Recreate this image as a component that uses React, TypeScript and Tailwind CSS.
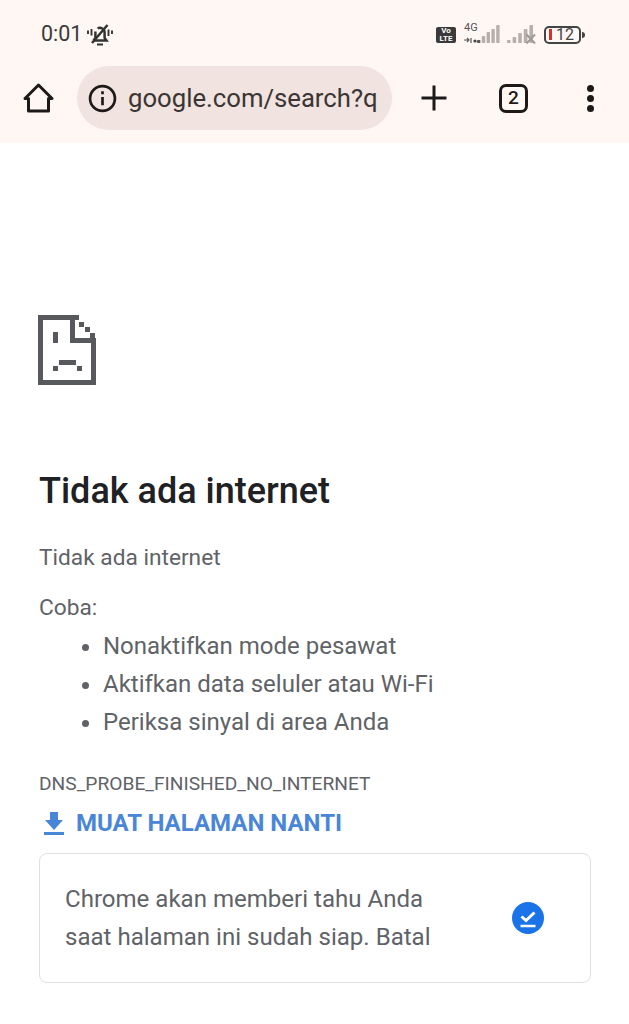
function MuteBell() {
  return (
    <svg width="26" height="22" viewBox="0 0 26 22" fill="none" stroke="#333" strokeWidth="2.5">
      <path d="M6.500 16.500h13l-1.900-2.600V8.500a4.800 4.800 0 0 0-7-4.200M8.400 7.500v6.400l-1.900 2.600" />
      <path d="M10 20.500h6" strokeWidth="2" />
      <path d="M5 19 20.500 1" />
      <path d="M4.500 5v6.500M1 6.500v3.500M21.500 5.500v6.500M25 6.500v3.500" strokeWidth="1.900" />
    </svg>
  );
}

function SignalBars() {
  return (
    <svg width="37" height="19" viewBox="0 0 37 19">
      <path d="M1 15h4M4 13l2 2-2 2M8 13v5" stroke="#555" strokeWidth="1.200" fill="none" />
      <circle cx="12" cy="16" r="1.600" fill="#444" />
      {[3, 7, 11, 14, 18].map((h, i) => (
        <rect key={i} x={14 + i * 4.8} y={18 - h} width="3.400" height={h} rx="0.800" fill={i === 0 ? "#555" : "#b5b0ae"} />
      ))}
    </svg>
  );
}

function NoSignalBars() {
  return (
    <svg width="29" height="19" viewBox="0 0 29 19">
      {[3, 6, 10, 14, 18].map((h, i) => (
        <rect key={i} x={i * 5.6} y={18 - h} width="3.600" height={h} rx="0.800" fill="#b5b0ae" />
      ))}
      <path d="M19.500 9.500l8.500 9M28 9.500l-8.500 9" stroke="#9e9a98" strokeWidth="2" />
    </svg>
  );
}

function SadTab() {
  return (
    <svg width="58" height="70" viewBox="0 0 58 70" fill="#58595c" shapeRendering="crispEdges" className="-ml-[1px]">
      <path d="M0 0h41v5H5v60h48V23h5v47H0z" />
      <path d="M32 5h5v18h21v5H32z" />
      <rect x="41" y="7" width="5" height="5" />
      <rect x="47" y="12" width="5" height="5" />
      <rect x="52" y="18" width="5" height="5" />
      <rect x="15" y="17" width="5" height="11" />
      <rect x="21" y="45" width="17" height="5" />
      <rect x="15" y="51" width="5" height="5" />
      <rect x="39" y="51" width="5" height="5" />
    </svg>
  );
}

export default function App() {
  return (
    <div className="h-[1024px] w-[629px] overflow-hidden bg-white font-['Roboto',sans-serif]">
      <header className="h-[143px] bg-[#fff7f4]">
        <div className="flex h-[66px] items-center justify-between pl-[41px] pr-[44px] pt-[3px]">
          <div className="flex items-center gap-[5px] text-[21.500px] text-[#3c3a39]">
            <span>0:01</span>
            <MuteBell />
          </div>
          <div className="flex items-center">
            <span className="mr-[7px] flex h-[16px] w-[20px] flex-col items-center justify-center rounded-[2px] bg-[#3a3a3a] text-[8px] font-bold leading-[8px] text-white">
              <span>Vo</span>
              <span>LTE</span>
            </span>
            <div className="relative mr-[7px]">
              <span className="absolute -top-[3px] left-[1px] text-[11px] leading-none text-[#555]">4G</span>
              <SignalBars />
            </div>
            <div className="mr-[8px]">
              <NoSignalBars />
            </div>
            <div className="flex h-[18px] w-[37px] items-center rounded-[5px] border-2 border-[#444] pl-[3px]">
              <span className="h-[11px] w-[3px] bg-[#d32f2f]" />
              <span className="ml-[4px] text-[16px] leading-none text-[#444]">12</span>
            </div>
            <span className="ml-[1px] h-[6px] w-[3px] rounded-r-sm bg-[#444]" />
          </div>
        </div>
        <div className="flex h-[64px] items-center pl-[23px]">
          <svg width="31" height="30" viewBox="0 0 31 30" fill="none" stroke="#1c1918" strokeWidth="3" strokeLinejoin="round">
            <path d="M2 15.500 15.500 2 29 15.500h-3.500V28H5.500V15.500z" />
          </svg>
          <div className="ml-[23px] flex h-[64px] w-[315px] shrink-0 items-center overflow-hidden rounded-[32px] bg-[#f0e3e0] pl-[11px]">
            <svg width="29" height="29" viewBox="0 0 28 28" fill="none" stroke="#1c1918" strokeWidth="2.600" className="shrink-0">
              <circle cx="14" cy="14" r="12" />
              <path d="M14 12.500v8" />
              <path d="M14 7v3" />
            </svg>
            <span className="ml-[11px] whitespace-nowrap pt-[1px] text-[25.700px] text-[#3b3533]">google.com/search?q</span>
          </div>
          <svg width="28" height="28" viewBox="0 0 28 28" stroke="#1c1918" strokeWidth="3" className="ml-[28px] shrink-0">
            <path d="M14 1.500v25M1.500 14h25" />
          </svg>
          <div className="ml-[51px] flex h-[29px] w-[29px] shrink-0 items-center justify-center rounded-[7px] border-[3px] border-[#1c1918] text-[19px] font-medium text-[#1c1918]">
            2
          </div>
          <div className="ml-[59px] flex shrink-0 flex-col gap-[3px]">
            <span className="h-[7px] w-[7px] rounded-full bg-[#1c1918]" />
            <span className="h-[7px] w-[7px] rounded-full bg-[#1c1918]" />
            <span className="h-[7px] w-[7px] rounded-full bg-[#1c1918]" />
          </div>
        </div>
      </header>

      <main className="px-[39px] pt-[172px]">
        <SadTab />
        <h1 className="mt-[84px] text-[36px] font-medium leading-[44px] text-[#202124]">Tidak ada internet</h1>
        <p className="mt-[29px] text-[22.700px] leading-[32px] text-[#5f6368]">Tidak ada internet</p>
        <p className="mt-[18px] text-[22.700px] leading-[32px] text-[#5f6368]">Coba:</p>
        <ul className="ml-[64px] mt-[3px] list-disc text-[24px] leading-[38px] text-[#5f6368]">
          <li>Nonaktifkan mode pesawat</li>
          <li>Aktifkan data seluler atau Wi-Fi</li>
          <li>Periksa sinyal di area Anda</li>
        </ul>
        <p className="mt-[31px] text-[19.200px] leading-[24px] text-[#5f6368]">DNS_PROBE_FINISHED_NO_INTERNET</p>
        <div className="mt-[11px] flex h-[32px] items-center text-[#4a86d8]">
          <svg width="20" height="23" viewBox="0 0 20 23" fill="#4a86d8" className="ml-[5px] shrink-0">
            <path d="M6 0h8v8h5l-9 10L1 8h5z" />
            <rect x="0" y="20" width="20" height="3" />
          </svg>
          <span className="ml-[12px] text-[24px] font-bold">MUAT HALAMAN NANTI</span>
        </div>
        <div className="mt-[14px] flex h-[130px] w-[552px] items-center justify-between rounded-[8px] border border-[#e0e0e0] pl-[25px] pr-[46px]">
          <p className="text-[24.050px] leading-[38.500px] text-[#5f6368]">
            Chrome akan memberi tahu Anda
            <br />
            saat halaman ini sudah siap. Batal
          </p>
          <svg width="32" height="32" viewBox="0 0 32 32" className="shrink-0">
            <circle cx="16" cy="16" r="16" fill="#1a73e8" />
            <path d="M9.500 14.500l4.500 4 8.500-8" fill="none" stroke="#fff" strokeWidth="3" />
            <path d="M8.500 24h15" stroke="#fff" strokeWidth="2.500" />
          </svg>
        </div>
      </main>
    </div>
  );
}
